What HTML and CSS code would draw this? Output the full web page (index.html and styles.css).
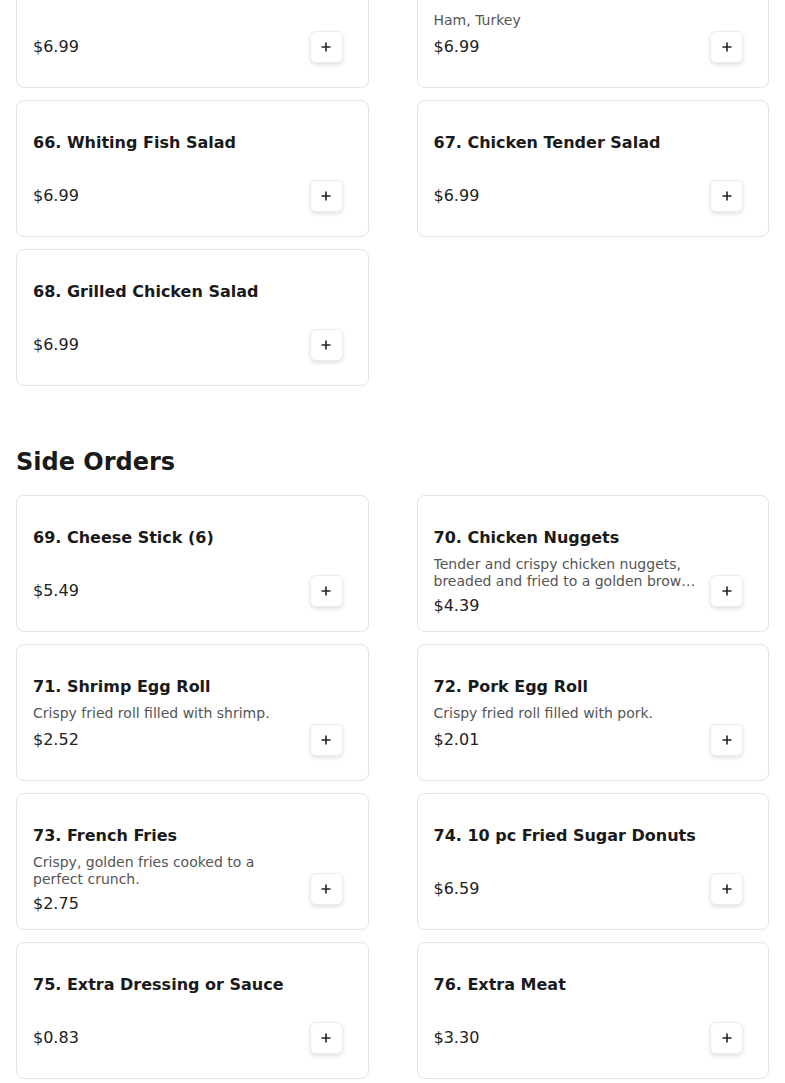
FILE: index.html
```html
<!DOCTYPE html>
<html>
<head>
<meta charset="utf-8">
<link rel="stylesheet" href="styles.css">
</head>
<body>
<main class="menu">
  <section class="section section-first">
    <div class="grid">
      <div class="card">
        <div class="info">
          <h3 class="title">65. Chef Salad</h3>
          <p class="desc"></p>
          <div class="price">$6.99</div>
        </div>
        <button class="add" aria-label="Add"><svg viewBox="0 0 12 12" width="12" height="12"><path d="M6 1.5v9M1.5 6h9" stroke="#222" stroke-width="1.6" fill="none"/></svg></button>
      </div>
      <div class="card">
        <div class="info">
          <h3 class="title">65. Cold Cut Salad</h3>
          <p class="desc">Ham, Turkey</p>
          <div class="price">$6.99</div>
        </div>
        <button class="add" aria-label="Add"><svg viewBox="0 0 12 12" width="12" height="12"><path d="M6 1.5v9M1.5 6h9" stroke="#222" stroke-width="1.6" fill="none"/></svg></button>
      </div>
      <div class="card">
        <div class="info">
          <h3 class="title">66. Whiting Fish Salad</h3>
          <p class="desc"></p>
          <div class="price">$6.99</div>
        </div>
        <button class="add" aria-label="Add"><svg viewBox="0 0 12 12" width="12" height="12"><path d="M6 1.5v9M1.5 6h9" stroke="#222" stroke-width="1.6" fill="none"/></svg></button>
      </div>
      <div class="card">
        <div class="info">
          <h3 class="title">67. Chicken Tender Salad</h3>
          <p class="desc"></p>
          <div class="price">$6.99</div>
        </div>
        <button class="add" aria-label="Add"><svg viewBox="0 0 12 12" width="12" height="12"><path d="M6 1.5v9M1.5 6h9" stroke="#222" stroke-width="1.6" fill="none"/></svg></button>
      </div>
      <div class="card">
        <div class="info">
          <h3 class="title">68. Grilled Chicken Salad</h3>
          <p class="desc"></p>
          <div class="price">$6.99</div>
        </div>
        <button class="add" aria-label="Add"><svg viewBox="0 0 12 12" width="12" height="12"><path d="M6 1.5v9M1.5 6h9" stroke="#222" stroke-width="1.6" fill="none"/></svg></button>
      </div>
    </div>
  </section>

  <section class="section">
    <h2 class="section-title">Side Orders</h2>
    <div class="grid">
      <div class="card">
        <div class="info">
          <h3 class="title">69. Cheese Stick (6)</h3>
          <p class="desc"></p>
          <div class="price">$5.49</div>
        </div>
        <button class="add" aria-label="Add"><svg viewBox="0 0 12 12" width="12" height="12"><path d="M6 1.5v9M1.5 6h9" stroke="#222" stroke-width="1.6" fill="none"/></svg></button>
      </div>
      <div class="card">
        <div class="info">
          <h3 class="title">70. Chicken Nuggets</h3>
          <p class="desc">Tender and crispy chicken nuggets, breaded and fried to a golden brown perfection.</p>
          <div class="price">$4.39</div>
        </div>
        <button class="add" aria-label="Add"><svg viewBox="0 0 12 12" width="12" height="12"><path d="M6 1.5v9M1.5 6h9" stroke="#222" stroke-width="1.6" fill="none"/></svg></button>
      </div>
      <div class="card">
        <div class="info">
          <h3 class="title">71. Shrimp Egg Roll</h3>
          <p class="desc">Crispy fried roll filled with shrimp.</p>
          <div class="price">$2.52</div>
        </div>
        <button class="add" aria-label="Add"><svg viewBox="0 0 12 12" width="12" height="12"><path d="M6 1.5v9M1.5 6h9" stroke="#222" stroke-width="1.6" fill="none"/></svg></button>
      </div>
      <div class="card">
        <div class="info">
          <h3 class="title">72. Pork Egg Roll</h3>
          <p class="desc">Crispy fried roll filled with pork.</p>
          <div class="price">$2.01</div>
        </div>
        <button class="add" aria-label="Add"><svg viewBox="0 0 12 12" width="12" height="12"><path d="M6 1.5v9M1.5 6h9" stroke="#222" stroke-width="1.6" fill="none"/></svg></button>
      </div>
      <div class="card">
        <div class="info">
          <h3 class="title">73. French Fries</h3>
          <p class="desc">Crispy, golden fries cooked to a perfect crunch.</p>
          <div class="price">$2.75</div>
        </div>
        <button class="add" aria-label="Add"><svg viewBox="0 0 12 12" width="12" height="12"><path d="M6 1.5v9M1.5 6h9" stroke="#222" stroke-width="1.6" fill="none"/></svg></button>
      </div>
      <div class="card">
        <div class="info">
          <h3 class="title">74. 10 pc Fried Sugar Donuts</h3>
          <p class="desc"></p>
          <div class="price">$6.59</div>
        </div>
        <button class="add" aria-label="Add"><svg viewBox="0 0 12 12" width="12" height="12"><path d="M6 1.5v9M1.5 6h9" stroke="#222" stroke-width="1.6" fill="none"/></svg></button>
      </div>
      <div class="card">
        <div class="info">
          <h3 class="title">75. Extra Dressing or Sauce</h3>
          <p class="desc"></p>
          <div class="price">$0.83</div>
        </div>
        <button class="add" aria-label="Add"><svg viewBox="0 0 12 12" width="12" height="12"><path d="M6 1.5v9M1.5 6h9" stroke="#222" stroke-width="1.6" fill="none"/></svg></button>
      </div>
      <div class="card">
        <div class="info">
          <h3 class="title">76. Extra Meat</h3>
          <p class="desc"></p>
          <div class="price">$3.30</div>
        </div>
        <button class="add" aria-label="Add"><svg viewBox="0 0 12 12" width="12" height="12"><path d="M6 1.5v9M1.5 6h9" stroke="#222" stroke-width="1.6" fill="none"/></svg></button>
      </div>
    </div>
  </section>
</main>
</body>
</html>
```

FILE: styles.css
```css
* { box-sizing: border-box; }

html, body {
  margin: 0;
  padding: 0;
  background: #ffffff;
  font-family: "DejaVu Sans", sans-serif;
  color: #1a1a1a;
}

.menu {
  padding: 0 16px;
  margin-top: -49px;
}

.section-first {
  margin-bottom: 60px;
}

.section-title {
  margin: 0 0 17px;
  font-size: 24px;
  line-height: 32px;
  font-weight: 700;
  color: #1a1a1a;
}

.grid {
  display: grid;
  grid-template-columns: 1fr 1fr;
  column-gap: 48px;
  row-gap: 12px;
}

.card {
  height: 137px;
  border: 1px solid #e3e3e3;
  border-radius: 8px;
  background: #fff;
  display: flex;
  align-items: flex-start;
  padding: 30px 25px 0 16px;
}

.info {
  flex: 1;
  min-width: 0;
  padding-right: 12px;
}

.title {
  margin: 0;
  font-size: 16px;
  line-height: 24px;
  font-weight: 700;
  color: #1a1a1a;
}

.desc {
  margin: 6px 0 0;
  min-height: 19px;
  font-size: 14px;
  line-height: 17px;
  color: #555;
  display: -webkit-box;
  -webkit-line-clamp: 2;
  -webkit-box-orient: vertical;
  overflow: hidden;
}

.price {
  margin-top: 4px;
  font-size: 16px;
  line-height: 24px;
  color: #222;
}

.add {
  flex: none;
  margin-top: 49px;
  width: 33px;
  height: 32px;
  padding: 0;
  border: 1px solid #ececec;
  border-radius: 6px;
  background: #fff;
  box-shadow: 0 2px 4px rgba(0, 0, 0, 0.12);
  display: flex;
  align-items: center;
  justify-content: center;
  cursor: pointer;
}

.add svg { display: block; }
```
